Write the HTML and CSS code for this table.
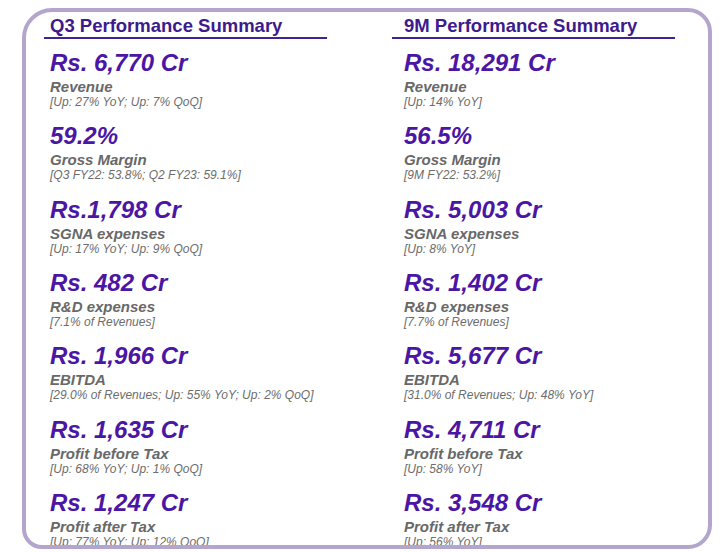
FILE: index.html
```html
<!DOCTYPE html>
<html lang="en">
<head>
<meta charset="utf-8">
<title>Performance Summary</title>
<link rel="stylesheet" href="styles.css">
</head>
<body>
<div class="frame">
  <section class="col col-left">
    <h2 class="col-title">Q3 Performance Summary</h2>
    <div class="metrics">
      <div class="metric"><div class="value">Rs. 6,770 Cr</div><div class="label">Revenue</div><div class="note">[Up: 27% YoY; Up: 7% QoQ]</div></div>
      <div class="metric"><div class="value">59.2%</div><div class="label">Gross Margin</div><div class="note">[Q3 FY22: 53.8%; Q2 FY23: 59.1%]</div></div>
      <div class="metric"><div class="value">Rs.1,798 Cr</div><div class="label">SGNA expenses</div><div class="note">[Up: 17% YoY; Up: 9% QoQ]</div></div>
      <div class="metric"><div class="value">Rs. 482 Cr</div><div class="label">R&amp;D expenses</div><div class="note">[7.1% of Revenues]</div></div>
      <div class="metric"><div class="value">Rs. 1,966 Cr</div><div class="label">EBITDA</div><div class="note">[29.0% of Revenues; Up: 55% YoY; Up: 2% QoQ]</div></div>
      <div class="metric"><div class="value">Rs. 1,635 Cr</div><div class="label">Profit before Tax</div><div class="note">[Up: 68% YoY; Up: 1% QoQ]</div></div>
      <div class="metric"><div class="value">Rs. 1,247 Cr</div><div class="label">Profit after Tax</div><div class="note">[Up: 77% YoY; Up: 12% QoQ]</div></div>
    </div>
  </section>
  <section class="col col-right">
    <h2 class="col-title">9M Performance Summary</h2>
    <div class="metrics">
      <div class="metric"><div class="value">Rs. 18,291 Cr</div><div class="label">Revenue</div><div class="note">[Up: 14% YoY]</div></div>
      <div class="metric"><div class="value">56.5%</div><div class="label">Gross Margin</div><div class="note">[9M FY22: 53.2%]</div></div>
      <div class="metric"><div class="value">Rs. 5,003 Cr</div><div class="label">SGNA expenses</div><div class="note">[Up: 8% YoY]</div></div>
      <div class="metric"><div class="value">Rs. 1,402 Cr</div><div class="label">R&amp;D expenses</div><div class="note">[7.7% of Revenues]</div></div>
      <div class="metric"><div class="value">Rs. 5,677 Cr</div><div class="label">EBITDA</div><div class="note">[31.0% of Revenues; Up: 48% YoY]</div></div>
      <div class="metric"><div class="value">Rs. 4,711 Cr</div><div class="label">Profit before Tax</div><div class="note">[Up: 58% YoY]</div></div>
      <div class="metric"><div class="value">Rs. 3,548 Cr</div><div class="label">Profit after Tax</div><div class="note">[Up: 56% YoY]</div></div>
    </div>
  </section>
</div>
</body>
</html>
```
FILE: styles.css
```css
html, body {
  margin: 0;
  padding: 0;
  background: #ffffff;
}
body {
  width: 728px;
  height: 552px;
  overflow: hidden;
  font-family: "Liberation Sans", Arial, sans-serif;
}
.frame {
  position: relative;
  box-sizing: border-box;
  width: 690px;
  height: 541px;
  margin: 8px 0 0 22px;
  padding: 7px 0 0 22px;
  display: flex;
  gap: 65px;
}
.frame::after {
  content: "";
  position: absolute;
  inset: 0;
  border: 4px solid #b3a5cb;
  border-radius: 30px 24px 24px 20px;
  pointer-events: none;
  z-index: 2;
}
.col {
  width: 283px;
  flex: none;
}
.col-title {
  margin: 0;
  font-size: 18.5px;
  line-height: 22.4px;
  font-weight: bold;
  color: #3d1b8d;
  border-bottom: 2px solid #3f2391;
}
.col-left .col-title,
.col-left .metrics { padding-left: 6px; }
.col-right .col-title,
.col-right .metrics { padding-left: 12px; }
.metrics {
  margin-top: 8.5px;
}
.metric {
  height: 73.33px;
}
.value {
  font-size: 24px;
  line-height: 29px;
  font-weight: bold;
  font-style: italic;
  color: #4a16a3;
  white-space: nowrap;
}
.label {
  font-size: 15px;
  line-height: 19px;
  font-weight: bold;
  font-style: italic;
  color: #686868;
  white-space: nowrap;
}
.note {
  font-size: 12px;
  line-height: 12px;
  font-style: italic;
  color: #6c6c6c;
  white-space: nowrap;
}
```
